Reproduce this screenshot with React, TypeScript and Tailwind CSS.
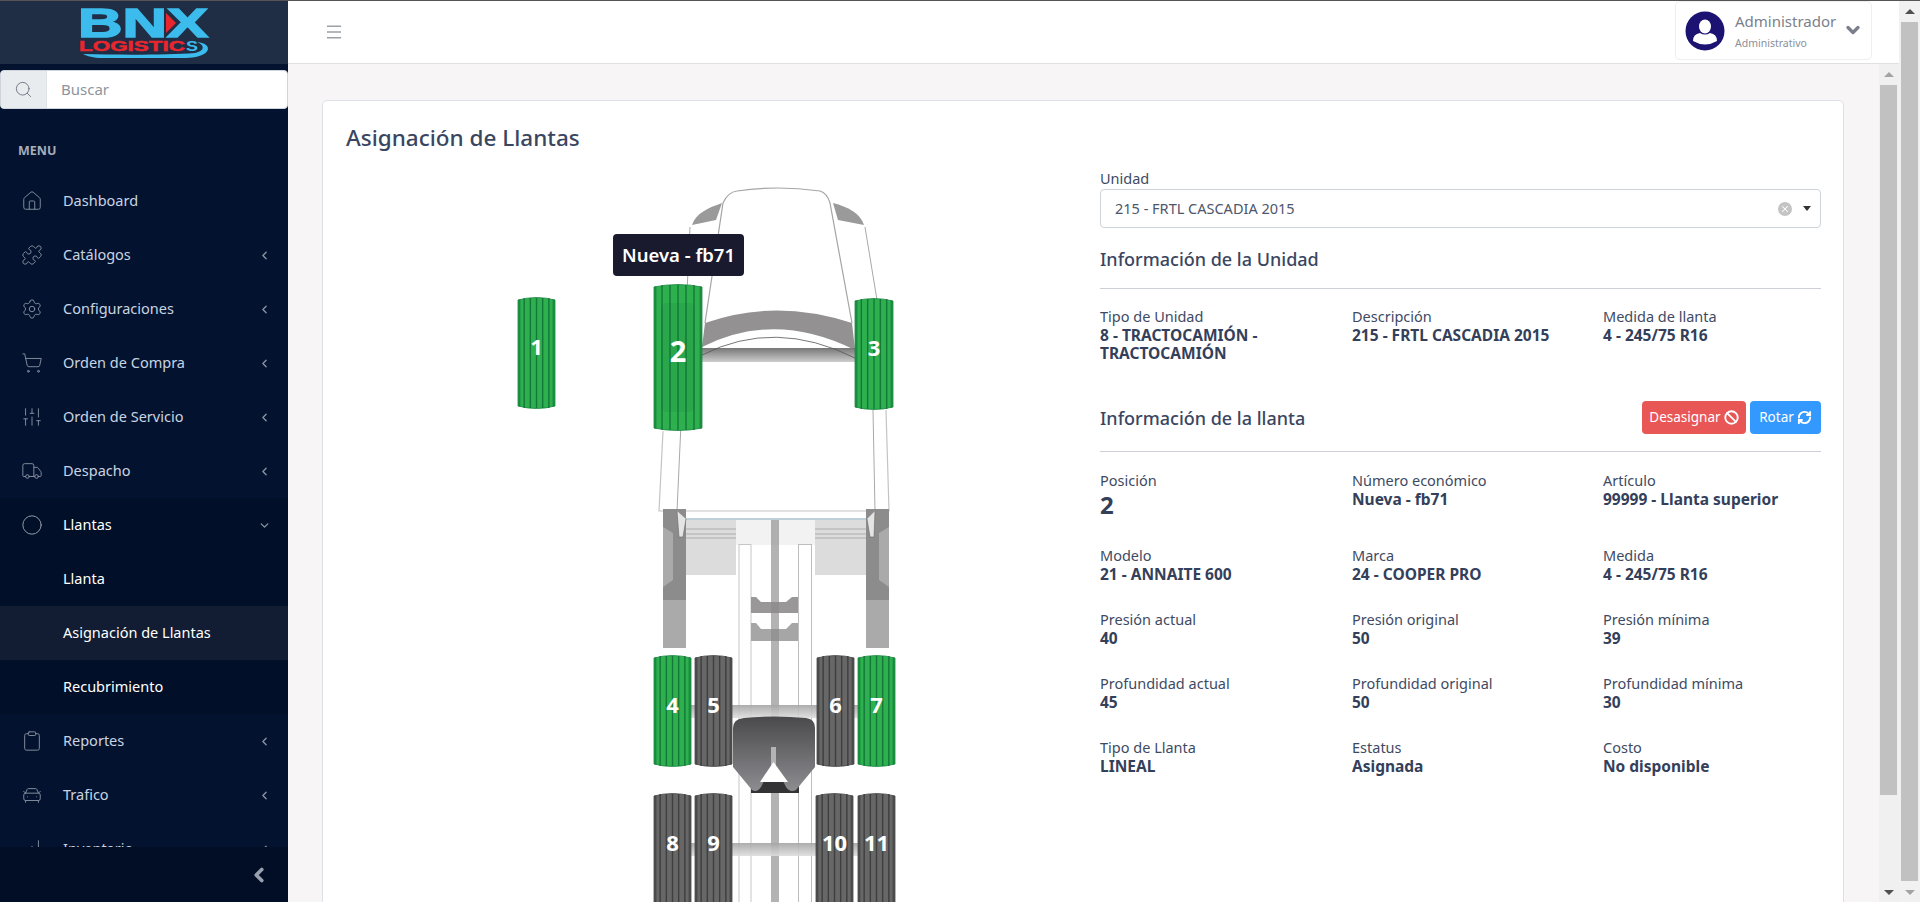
import React from 'react';
import { Home, Puzzle, Settings, ShoppingCart, SlidersVertical, Truck, Circle, Clipboard, CarFront, ChartNoAxesColumnIncreasing, ChevronLeft, ChevronDown, Search, Menu, Ban, RefreshCw, X } from 'lucide-react';

const items: [string, React.ElementType, boolean][] = [
  ['Dashboard', Home, false],
  ['Catálogos', Puzzle, true],
  ['Configuraciones', Settings, true],
  ['Orden de Compra', ShoppingCart, true],
  ['Orden de Servicio', SlidersVertical, true],
  ['Despacho', Truck, true],
];
const items2: [string, React.ElementType, boolean][] = [
  ['Reportes', Clipboard, true],
  ['Trafico', CarFront, true],
  ['Inventario', ChartNoAxesColumnIncreasing, true],
];

function NavItem({ label, Icon, arrow }: { label: string; Icon: React.ElementType; arrow: boolean }) {
  return (
    <div className="h-[54px] shrink-0 flex items-center pl-[21px] pr-[17px] text-[14.5px] text-[#c9d3e2]">
      <Icon size={22} strokeWidth={1} className="text-[#8a93a3] mr-[20px] shrink-0" />
      <span className="flex-1">{label}</span>
      {arrow && <ChevronLeft size={13} strokeWidth={2.5} className="text-[#8a93a3]" />}
    </div>
  );
}

function Logo() {
  return (
    <svg width="134" height="63" viewBox="78 1 134 63">
      <text x="79" y="37" fontFamily="Liberation Sans" fontWeight="700" fontSize="40" fill="#3cbcec" stroke="#3cbcec" strokeWidth="1.5" textLength="130" lengthAdjust="spacingAndGlyphs">BNX</text>
      <path d="M167 13 L177 23 L167 33 Z" fill="#e8262e" />
      <text x="80" y="51" fontFamily="Liberation Sans" fontWeight="700" fontSize="15" fill="#e8262e" stroke="#e8262e" strokeWidth=".5" textLength="106" lengthAdjust="spacingAndGlyphs">LOGISTIC</text>
      <text x="187" y="51" fontFamily="Liberation Sans" fontWeight="700" fontSize="15" fill="#3cbcec" textLength="12" lengthAdjust="spacingAndGlyphs">S</text>
      <path d="M84 54 C120 55 170 55 196 53 C206 51 206 45 198 42 C210 43 212 50 205 54 C198 58 190 58 180 58 L104 58 C94 58 88 56 84 54 Z" fill="#3cbcec" />
    </svg>
  );
}

function Sidebar() {
  return (
    <aside className="w-[288px] shrink-0 h-full bg-[#03132f] flex flex-col overflow-hidden relative">
      <div className="h-[63px] shrink-0 bg-[#1f2d45] flex items-center justify-center">
        <Logo />
      </div>
      <div className="mt-[6px] h-[39px] shrink-0 flex rounded-[4px] overflow-hidden bg-white border border-[#ced4da]">
        <div className="w-[46px] bg-[#e9ecef] flex items-center justify-center border-r border-[#dfe3e7]">
          <Search size={19} strokeWidth={1} className="text-[#5a6270]" />
        </div>
        <div className="flex-1 flex items-center pl-[14px] text-[15px] text-[#8e959d]">Buscar</div>
      </div>
      <div className="mt-[34px] h-[17px] shrink-0 flex items-center pl-[18px] text-[12.5px] font-bold text-[#a6adbb] leading-none">MENU</div>
      <div className="mt-[14px] flex flex-col shrink-0">
        {items.map(([l, I, a]) => <NavItem key={l} label={l} Icon={I} arrow={a} />)}
        <div className="bg-[#020f28] text-white flex flex-col">
          <div className="h-[54px] flex items-center pl-[21px] pr-[17px] text-[14.5px]">
            <Circle size={22} strokeWidth={1} className="text-[#a0a6b2] mr-[20px]" />
            <span className="flex-1">Llantas</span>
            <ChevronDown size={13} strokeWidth={2.5} className="text-[#8a93a3]" />
          </div>
          <div className="h-[54px] flex items-center pl-[63px] text-[14.5px]">Llanta</div>
          <div className="h-[54px] flex items-center pl-[63px] text-[14.5px] bg-[#121c33]">Asignación de Llantas</div>
          <div className="h-[54px] flex items-center pl-[63px] text-[14.5px]">Recubrimiento</div>
        </div>
        {items2.map(([l, I, a]) => <NavItem key={l} label={l} Icon={I} arrow={a} />)}
      </div>
      <div className="absolute left-0 right-0 bottom-0 h-[55px] bg-[#020e26] flex items-center justify-end pr-[18px]">
        <ChevronLeft size={22} strokeWidth={4} className="text-[#9aa1ae]" />
      </div>
    </aside>
  );
}

function Tire({ x, y, w, h, n, green, size = 22, hl }: { x: number; y: number; w: number; h: number; n: string; green?: boolean; size?: number; hl?: boolean }) {
  const fill = green ? '#2fb04f' : '#676767';
  const stripe = green ? '#12793a' : '#3f3f3f';
  const edge = green ? '#16853c' : '#444444';
  const stripes = [1, 2, 3, 4, 5].map((i) => x + (w * i) / 6 - 0.7);
  return (
    <g>
      <path d={`M${x} ${y + 3} Q${x + w / 2} ${y - 2} ${x + w} ${y + 3} V${y + h - 3} Q${x + w / 2} ${y + h + 2} ${x} ${y + h - 3} Z`} fill={fill} stroke={edge} strokeWidth="0.8" />
      {stripes.map((sx) => <rect key={sx} x={sx} y={y + 1} width="1.4" height={h - 2} fill={stripe} />)}
      <rect x={x + 0.4} y={y + 2.5} width="2" height={h - 5} fill={stripe} opacity=".7" />
      <rect x={x + w - 2.4} y={y + 2.5} width="2" height={h - 5} fill={stripe} opacity=".7" />
      {hl && <rect x={x + 7} y={y + 19} width={w - 14} height={h - 38} rx="6" fill="#0c6b30" opacity=".12" />}
      <text x={x + w / 2} y={y + h / 2 - 6 + size * 0.36} textAnchor="middle" fontFamily="Noto Sans" fontWeight="700" fontSize={size} fill="#fff">{n}</text>
    </g>
  );
}

function TruckDiagram() {
  return (
    <svg width="430" height="732" viewBox="500 170 430 732" className="block">
      <defs>
        <linearGradient id="bar" x1="0" y1="0" x2="0" y2="1"><stop offset="0" stopColor="#777777" /><stop offset="1" stopColor="#cdcdcd" /></linearGradient>
        <linearGradient id="axle" x1="0" y1="0" x2="0" y2="1"><stop offset="0" stopColor="#a4a4a4" /><stop offset="1" stopColor="#dddddd" /></linearGradient>
        <linearGradient id="fifth" x1="0" y1="0" x2="0" y2="1"><stop offset="0" stopColor="#4a4a4d" /><stop offset="1" stopColor="#8d8d91" /></linearGradient>
      </defs>
      {/* cab */}
      <path d="M692 225 C696 213 708 208 722 203 L716 220 Z" fill="#9b9a9a" />
      <path d="M833 203 C848 207 860 213 864 225 L838 220 Z" fill="#9b9a9a" />
      <path d="M705 323 L723 203 Q728 192 737 191 Q777 185 820 191 Q827 193 830 203 L852 323" fill="none" stroke="#a5a5a5" strokeWidth="1.2" />
      <path d="M690 227 L677 511 M865 227 L877 300 M873 410 L875 511" fill="none" stroke="#a8a8a8" strokeWidth="1" />
      <path d="M663 431 L659 511 H889 L886 410" fill="none" stroke="#c4c4c4" strokeWidth="1.2" />
      <path d="M705 323 Q775 298 852 323 L855 350 Q775 310 702 347 Z" fill="#939191" />
      <rect x="702" y="348" width="153" height="14" fill="url(#bar)" />
      <path d="M702 355 Q775 318 855 358" fill="none" stroke="#555555" strokeWidth="0.8" />
      {/* chassis */}
      <rect x="683" y="520" width="53" height="55" fill="#dcdcdc" />
      <rect x="815" y="520" width="52" height="55" fill="#dcdcdc" />
      <rect x="683" y="528" width="53" height="2" fill="#c4c4c4" />
      <rect x="683" y="533" width="53" height="2" fill="#c4c4c4" />
      <rect x="683" y="537" width="53" height="2" fill="#c4c4c4" />
      <rect x="815" y="528" width="52" height="2" fill="#c4c4c4" />
      <rect x="815" y="533" width="52" height="2" fill="#c4c4c4" />
      <rect x="815" y="537" width="52" height="2" fill="#c4c4c4" />
      <rect x="736" y="520" width="79" height="25" fill="#f2f2f2" />
      <path d="M683 519 H867" stroke="#7fa0b0" strokeWidth="1" />
      <rect x="663" y="509" width="23" height="91" fill="#8c8c8c" />
      <rect x="866" y="509" width="23" height="91" fill="#8c8c8c" />
      <path d="M663 527 L673 533 V580 L663 587 Z" fill="#aaaaaa" />
      <path d="M889 527 L879 533 V580 L889 587 Z" fill="#aaaaaa" />
      <rect x="663" y="600" width="23" height="48" fill="#aaaaaa" />
      <rect x="866" y="600" width="23" height="48" fill="#aaaaaa" />
      <path d="M677 511 L679 537 H683 L686 519" fill="#e4e4e4" stroke="#666666" strokeWidth=".6" />
      <path d="M875 511 L874 537 H870 L867 519" fill="#e4e4e4" stroke="#666666" strokeWidth=".6" />
      <rect x="739" y="544.5" width="12" height="360" fill="#ffffff" stroke="#c6c6c6" />
      <rect x="798.5" y="544.5" width="13" height="360" fill="#ffffff" stroke="#bdbdbd" />
      <path d="M751 597 L756 597 L761 602 H786 L792 597 H798 V613 H751 Z" fill="#999797" />
      <path d="M751 623 L756 623 L761 629 H786 L792 623 H798 V641 H751 Z" fill="#a6a6a6" />
      <rect x="771" y="520" width="8" height="385" fill="#8a8a8a" opacity=".65" />
      {/* axles */}
      <rect x="691" y="705" width="167" height="13" fill="url(#axle)" opacity=".9" />
      <rect x="691" y="843" width="167" height="13" fill="url(#axle)" opacity=".9" />
      <path d="M751 781 L799 781 L799 793 L751 793 Z" fill="#333335" />
      <path fillRule="evenodd" d="M744 718 Q774 715 806 718 Q815 719 815 728 V767 L796 790 Q790 793 786 787 L776 767 V747 H771 V767 L761 787 Q757 793 752 790 L733 767 V728 Q733 719 744 718 Z" fill="url(#fifth)" />
      <path d="M773.5 762 L760 782 H788 Z" fill="#ffffff" />
      {/* tires */}
      <Tire x={518} y={297} w={37} h={112} n="1" green />
      <Tire x={654} y={284} w={48} h={147} n="2" green size={29} hl />
      <Tire x={855} y={298} w={38} h={112} n="3" green />
      <Tire x={654} y={655} w={37} h={112} n="4" green />
      <Tire x={695} y={655} w={37} h={112} n="5" />
      <Tire x={817} y={655} w={37} h={112} n="6" />
      <Tire x={858} y={655} w={37} h={112} n="7" green />
      <Tire x={654} y={793} w={37} h={112} n="8" />
      <Tire x={695} y={793} w={37} h={112} n="9" />
      <Tire x={816} y={793} w={37} h={112} n="10" />
      <Tire x={858} y={793} w={37} h={112} n="11" />
    </svg>
  );
}

function Field({ label, value, big }: { label: string; value: string; big?: boolean }) {
  return (
    <div className="pr-4">
      <div className="text-[14.5px] leading-[20px] text-[#3e4a63]">{label}</div>
      <div className={big ? 'text-[24px] leading-[29px] font-bold text-[#34405a]' : 'text-[15.5px] leading-[18px] font-bold text-[#34405a]'}>{value}</div>
    </div>
  );
}

function ScrollBar({ top, bottom, thumbClass, barClass }: { top: string; bottom: string; thumbClass: string; barClass: string }) {
  return (
    <div className={barClass}>
      <div className="h-[21px] shrink-0 flex items-center justify-center">
        <div className={`w-0 h-0 border-x-[5px] border-x-transparent border-b-[5px] ${top}`} />
      </div>
      <div className={thumbClass} />
      <div className="flex-1" />
      <div className="h-[20px] shrink-0 flex items-center justify-center">
        <div className={`w-0 h-0 border-x-[5px] border-x-transparent border-t-[5px] ${bottom}`} />
      </div>
    </div>
  );
}

const COLS = 'grid grid-cols-[252px_251px_1fr]';

function Content() {
  return (
    <div className="flex-1 min-w-0 bg-[#f7f5f6] pl-[34px] pr-[35px] pt-[36px] overflow-hidden">
      <div className="bg-white border border-[#dcdfe6] rounded-[5px] h-[900px] pl-[23px] pr-[22px]">
        <h1 className="text-[22.5px] leading-[30px] mt-[22px] font-medium text-[#3a4660]">Asignación de Llantas</h1>
        <div className="flex mt-[17px]">
          <div className="w-[754px] shrink-0 pl-[154px] relative">
            <TruckDiagram />
            <div className="absolute left-[267px] top-[64px] w-[131px] h-[42px] bg-[#1a1a2e] rounded-[4px] flex items-center justify-center text-[18.5px] font-semibold text-white whitespace-nowrap">Nueva - fb71</div>
          </div>
          <div className="flex-1 min-w-0">
            <div className="text-[14.5px] leading-[20px] text-[#3e4a63] mt-[-2px]">Unidad</div>
            <div className="h-[39px] mt-[1px] border border-[#ced4da] rounded-[4px] flex items-center pl-[14px] pr-[9px] text-[14.5px] text-[#4d566b]">
              <span className="flex-1">215 - FRTL CASCADIA 2015</span>
              <span className="w-[14px] h-[14px] rounded-full bg-[#c4c4c4] flex items-center justify-center mr-[11px]"><X size={10} strokeWidth={2.5} className="text-white" /></span>
              <span className="w-0 h-0 border-x-[4px] border-x-transparent border-t-[5px] border-t-[#333333]" />
            </div>
            <div className="text-[18px] leading-[26px] font-medium text-[#3a4660] mt-[18px]">Información de la Unidad</div>
            <div className="border-t border-[#cdd0d6] mt-[16px]" />
            <div className={`${COLS} mt-[17px]`}>
              <Field label="Tipo de Unidad" value="8 - TRACTOCAMIÓN - TRACTOCAMIÓN" />
              <Field label="Descripción" value="215 - FRTL CASCADIA 2015" />
              <Field label="Medida de llanta" value="4 - 245/75 R16" />
            </div>
            <div className="flex items-center justify-between mt-[39px] h-[33px]">
              <div className="text-[18px] leading-[26px] font-medium text-[#3a4660]">Información de la llanta</div>
              <div className="flex gap-[4px]">
                <div className="h-[33px] w-[104px] bg-[#e85656] rounded-[4px] flex items-center justify-center gap-[3px] text-[13.5px] text-white">Desasignar <Ban size={15} strokeWidth={3} /></div>
                <div className="h-[33px] w-[71px] bg-[#3399ff] rounded-[4px] flex items-center justify-center gap-[3px] text-[13.5px] text-white">Rotar <RefreshCw size={15} strokeWidth={3} /></div>
              </div>
            </div>
            <div className="border-t border-[#cdd0d6] mt-[17px]" />
            <div className={`${COLS} gap-y-[26px] mt-[18px]`}>
              <Field label="Posición" value="2" big />
              <Field label="Número económico" value="Nueva - fb71" />
              <Field label="Artículo" value="99999 - Llanta superior" />
              <Field label="Modelo" value="21 - ANNAITE 600" />
              <Field label="Marca" value="24 - COOPER PRO" />
              <Field label="Medida" value="4 - 245/75 R16" />
              <Field label="Presión actual" value="40" />
              <Field label="Presión original" value="50" />
              <Field label="Presión mínima" value="39" />
              <Field label="Profundidad actual" value="45" />
              <Field label="Profundidad original" value="50" />
              <Field label="Profundidad mínima" value="30" />
              <Field label="Tipo de Llanta" value="LINEAL" />
              <Field label="Estatus" value="Asignada" />
              <Field label="Costo" value="No disponible" />
            </div>
          </div>
        </div>
      </div>
    </div>
  );
}

export default function App() {
  return (
    <div className="h-screen w-full overflow-hidden flex flex-col bg-white font-['Noto_Sans',sans-serif]">
      <div className="h-px shrink-0 bg-[#555555]" />
      <div className="flex-1 min-h-0 flex">
        <Sidebar />
        <div className="flex-1 min-w-0 flex flex-col">
          <header className="h-[63px] shrink-0 bg-white border-b border-[#e0e0e0] flex items-center justify-between pl-[36px] pr-[27px]">
            <Menu size={20} strokeWidth={1} className="text-[#4b5563]" />
            <div className="w-[197px] h-[59px] mb-[3px] border border-[#eeeeee] rounded-[5px] flex items-center pl-[9px] relative">
              <svg width="40" height="40" viewBox="0 0 40 40" className="shrink-0">
                <circle cx="20" cy="20" r="19.5" fill="#1b1272" />
                <ellipse cx="20" cy="15.5" rx="6" ry="7" fill="#fff" />
                <path d="M8 30 Q8 23 15 22 Q20 25 25 22 Q32 23 32 30 Q20 37 8 30 Z" fill="#fff" />
              </svg>
              <div className="ml-[10px] flex flex-col">
                <span className="text-[15px] leading-[20px] text-[#7b7f8c]">Administrador</span>
                <span className="text-[10.5px] leading-[14px] mt-[5px] text-[#8b8f9b]">Administrativo</span>
              </div>
              <ChevronDown size={20} strokeWidth={4} className="text-[#7b7f8c] absolute right-[8px] top-[18px]" />
            </div>
          </header>
          <div className="flex-1 min-h-0 flex">
            <Content />
            <ScrollBar barClass="w-[20px] shrink-0 bg-[#f0f0f0] flex flex-col pl-px pr-[2px]" thumbClass="h-[710px] shrink-0 bg-[#c1c1c1]" top="border-b-[#a3a3a3]" bottom="border-t-[#505050]" />
          </div>
        </div>
        <ScrollBar barClass="w-[21px] shrink-0 bg-[#f1f1f1] flex flex-col px-[2px]" thumbClass="h-[859px] shrink-0 bg-[#c1c1c1]" top="border-b-[#505050]" bottom="border-t-[#a3a3a3]" />
      </div>
    </div>
  );
}
